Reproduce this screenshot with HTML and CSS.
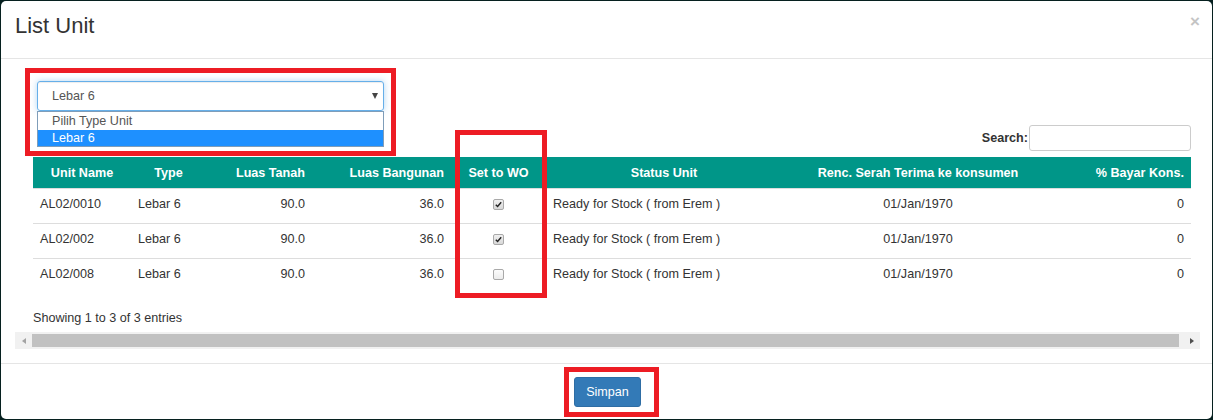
FILE: index.html
```html
<!DOCTYPE html>
<html lang="id">
<head>
<meta charset="utf-8">
<title>List Unit</title>
<link rel="stylesheet" href="styles.css">
</head>
<body>
<div class="modal">
  <div class="modal-header">
    <h4 class="modal-title">List Unit</h4>
    <span class="close">&times;</span>
  </div>
  <div class="modal-body">
    <div class="filter">
      <div class="select-wrap">
        <div class="select"><span>Lebar 6</span><span class="caret"></span></div>
        <ul class="listbox">
          <li class="opt-first">Pilih Type Unit</li>
          <li class="selected">Lebar 6</li>
        </ul>
      </div>
    </div>
    <div class="dt">
      <div class="search"><label class="search-label">Search:</label><span class="search-input"></span></div>
      <table class="units">
        <colgroup>
          <col class="c1"><col class="c2"><col class="c3"><col class="c4"><col class="c5"><col class="c6"><col class="c7"><col class="c8">
        </colgroup>
        <thead>
          <tr>
            <th>Unit Name</th>
            <th>Type</th>
            <th class="r">Luas Tanah</th>
            <th class="r">Luas Bangunan</th>
            <th>Set to WO</th>
            <th>Status Unit</th>
            <th>Renc. Serah Terima ke konsumen</th>
            <th class="r">% Bayar Kons.</th>
          </tr>
        </thead>
        <tbody>
          <tr>
            <td>AL02/0010</td><td>Lebar 6</td><td class="r">90.0</td><td class="r">36.0</td>
            <td class="c"><span class="cb checked"><svg viewBox="0 0 10 10" width="9" height="9"><path d="M2 5.2 L4 7.2 L8 2.6" fill="none" stroke="#222" stroke-width="1.6"/></svg></span></td>
            <td>Ready for Stock ( from Erem )</td><td class="c">01/Jan/1970</td><td class="r">0</td>
          </tr>
          <tr>
            <td>AL02/002</td><td>Lebar 6</td><td class="r">90.0</td><td class="r">36.0</td>
            <td class="c"><span class="cb checked"><svg viewBox="0 0 10 10" width="9" height="9"><path d="M2 5.2 L4 7.2 L8 2.6" fill="none" stroke="#222" stroke-width="1.6"/></svg></span></td>
            <td>Ready for Stock ( from Erem )</td><td class="c">01/Jan/1970</td><td class="r">0</td>
          </tr>
          <tr>
            <td>AL02/008</td><td>Lebar 6</td><td class="r">90.0</td><td class="r">36.0</td>
            <td class="c"><span class="cb"></span></td>
            <td>Ready for Stock ( from Erem )</td><td class="c">01/Jan/1970</td><td class="r">0</td>
          </tr>
        </tbody>
      </table>
      <div class="info">Showing 1 to 3 of 3 entries</div>
    </div>
    <div class="hscroll">
      <span class="sb-btn"><span class="arrow-left"></span></span>
      <span class="sb-thumb"></span>
      <span class="sb-rest"></span>
      <span class="sb-btn"><span class="arrow-right"></span></span>
    </div>
  </div>
  <div class="modal-footer">
    <button class="btn">Simpan</button>
  </div>
  <div class="mark mark-select"></div>
  <div class="mark mark-col"></div>
  <div class="mark mark-btn"></div>
</div>
</body>
</html>
```

FILE: styles.css
```css
html, body {
  margin: 0;
  padding: 0;
}
body {
  background: #06201f;
  font-family: "Liberation Sans", Arial, sans-serif;
  font-size: 12.6px;
  line-height: 18px;
  color: #333;
  width: 1213px;
  height: 420px;
  overflow: hidden;
}
.modal {
  position: relative;
  margin: 1px 1px 0 1px;
  height: 418px;
  background: #fff;
  border-radius: 5px;
}
.modal-header {
  box-sizing: border-box;
  height: 58px;
  padding: 13px 14px 0 14px;
  border-bottom: 1px solid #e5e5e5;
  display: flex;
  justify-content: space-between;
  align-items: flex-start;
}
.modal-title {
  margin: 0;
  font-size: 22px;
  line-height: 24px;
  font-weight: normal;
  color: #333;
}
.close {
  font-size: 17px;
  font-weight: bold;
  line-height: 17px;
  color: #c4c4c4;
  margin-top: -1px;
  margin-right: -2px;
}
.modal-body {
  padding: 0 12px 14px 14px;
}
.filter {
  padding: 22px 0 0 22px;
}
.select-wrap {
  position: relative;
  width: 347px;
}
.select {
  box-sizing: border-box;
  height: 30px;
  border: 1px solid #66afe9;
  border-radius: 3px;
  box-shadow: inset 0 1px 1px rgba(0,0,0,.075), 0 0 6px rgba(102,175,233,.5);
  padding: 0 5px 0 14px;
  display: flex;
  align-items: center;
  justify-content: space-between;
  color: #555;
}
.caret {
  width: 0;
  height: 0;
  border-left: 3.5px solid transparent;
  border-right: 3.5px solid transparent;
  border-top: 6px solid #444;
}
.listbox {
  position: absolute;
  left: 0;
  top: 30px;
  width: 347px;
  box-sizing: border-box;
  margin: 0;
  padding: 0;
  list-style: none;
  background: #fff;
  border: 1px solid #7f9db9;
  z-index: 2;
}
.listbox li {
  height: 16px;
  line-height: 16px;
  padding-left: 14px;
  color: #555;
}
.listbox li.opt-first {
  height: 18px;
  line-height: 18px;
}
.listbox li.selected {
  background: #1e90ff;
  color: #fff;
}
.dt {
  padding: 0 9px 0 18px;
}
.search {
  display: flex;
  justify-content: flex-end;
  align-items: center;
  margin-top: 14px;
}
.search-label {
  font-weight: bold;
  color: #333;
}
.search-input {
  box-sizing: border-box;
  width: 162px;
  height: 26px;
  border: 1px solid #ccc;
  border-radius: 3px;
  margin-left: 1px;
}
.units {
  margin-top: 6px;
  width: 1158px;
  table-layout: fixed;
  border-collapse: collapse;
}
.c1 { width: 98px; }
.c2 { width: 75px; }
.c3 { width: 106px; }
.c4 { width: 139px; }
.c5 { width: 95px; }
.c6 { width: 236px; }
.c7 { width: 272px; }
.c8 { width: 137px; }
.units th {
  background: #009688;
  color: #fff;
  font-weight: bold;
  padding: 6.5px 7px;
  text-align: center;
  white-space: nowrap;
}
.units td {
  padding: 6px 7px 10px 7px;
  border-top: 1px solid #ddd;
  text-align: left;
  white-space: nowrap;
}
.units .r { text-align: right; }
.units .c { text-align: center; }
.cb {
  display: inline-flex;
  align-items: center;
  justify-content: center;
  box-sizing: border-box;
  width: 11px;
  height: 11px;
  border: 1px solid #a9a9a9;
  border-radius: 2px;
  background: linear-gradient(#fcfcfc, #ececec);
  vertical-align: middle;
}
.cb.checked {
  background: linear-gradient(#f0f0f0, #d8d8d8);
}
.info {
  margin-top: 16px;
}
.hscroll {
  margin-top: 5px;
  height: 17px;
  background: #f1f1f1;
  display: flex;
  align-items: center;
}
.sb-btn {
  width: 17px;
  height: 17px;
  display: flex;
  align-items: center;
  justify-content: center;
}
.sb-thumb {
  height: 13px;
  width: 1147px;
  background: #c1c1c1;
}
.sb-rest {
  flex: 1;
}
.arrow-left {
  width: 0;
  height: 0;
  border-top: 3px solid transparent;
  border-bottom: 3px solid transparent;
  border-right: 4px solid #a3a3a3;
}
.arrow-right {
  width: 0;
  height: 0;
  border-top: 3.5px solid transparent;
  border-bottom: 3.5px solid transparent;
  border-left: 4px solid #505050;
}
.modal-footer {
  border-top: 1px solid #e5e5e5;
  padding-top: 13px;
  display: flex;
  justify-content: center;
}
.btn {
  font-family: "Liberation Sans", Arial, sans-serif;
  font-size: 12.6px;
  line-height: 18px;
  color: #fff;
  background: #337ab7;
  border: 1px solid #2e6da4;
  border-radius: 3px;
  padding: 5px 11px;
  margin-left: 2px;
}
.mark {
  position: absolute;
  box-sizing: border-box;
  border: 5px solid #ed1c24;
  z-index: 3;
}
.mark-select {
  left: 24px;
  top: 67px;
  width: 371px;
  height: 88px;
}
.mark-col {
  left: 454px;
  top: 129px;
  width: 92px;
  height: 168px;
}
.mark-btn {
  left: 563px;
  top: 366px;
  width: 95px;
  height: 50px;
}
```
